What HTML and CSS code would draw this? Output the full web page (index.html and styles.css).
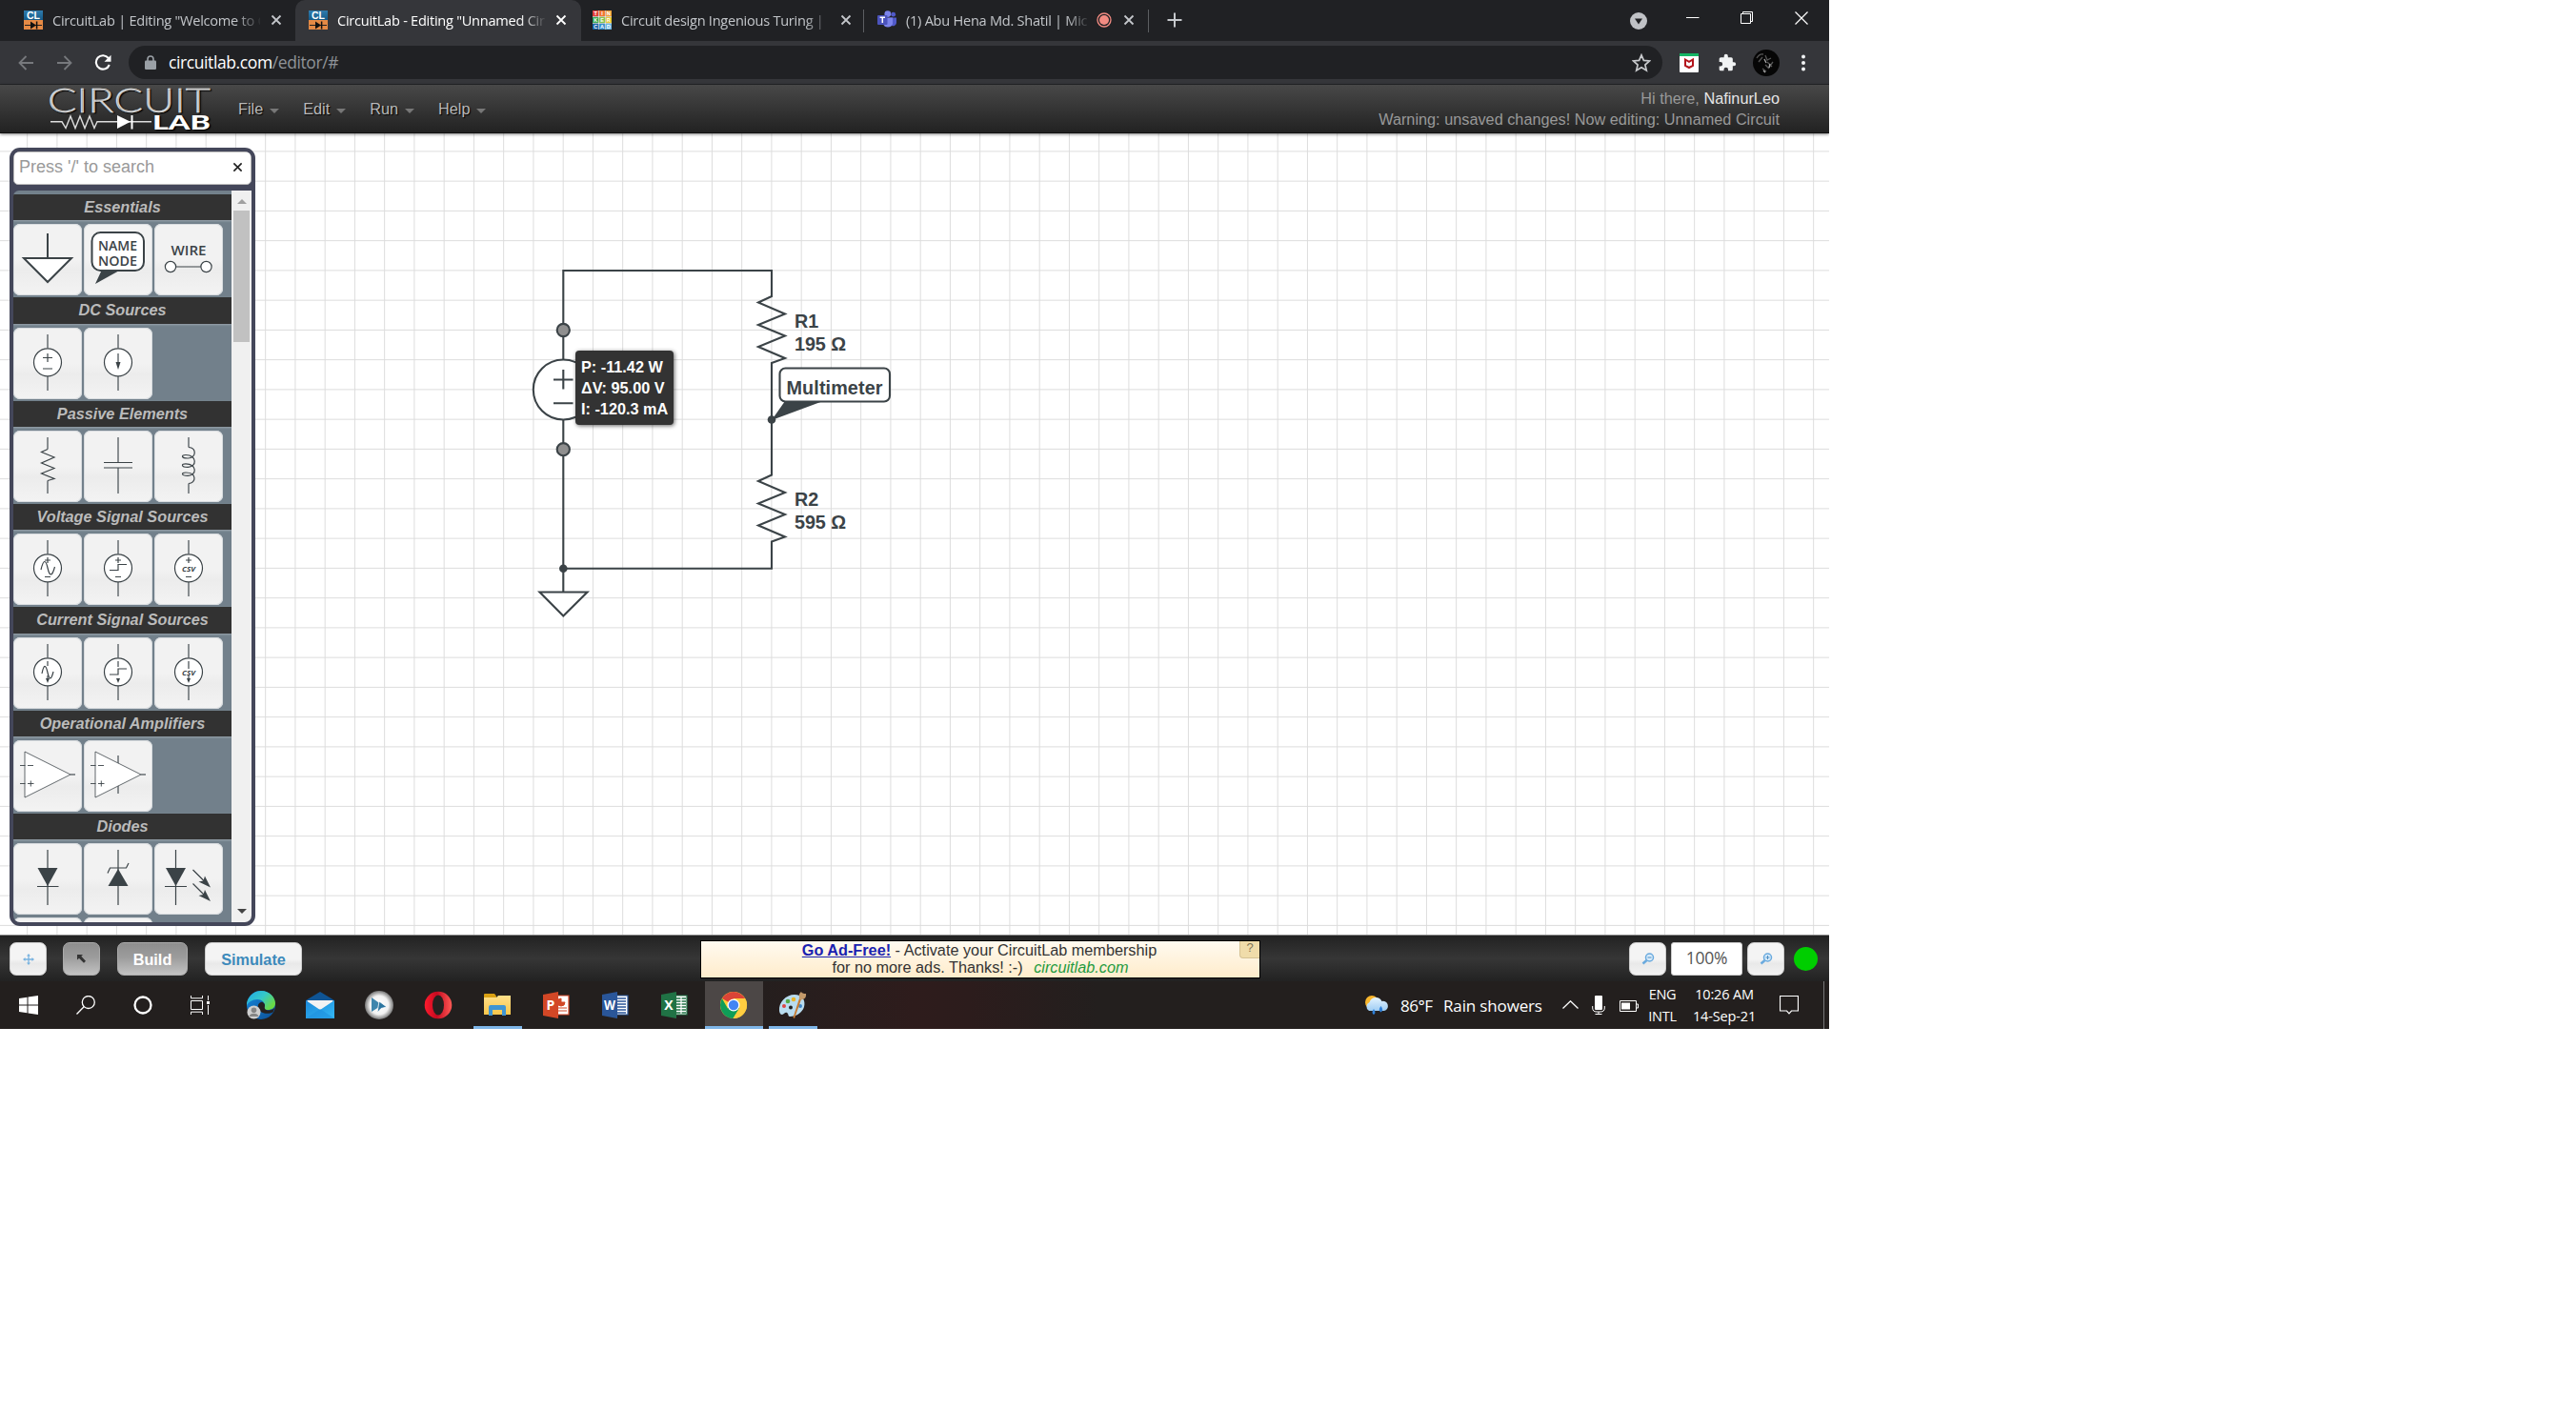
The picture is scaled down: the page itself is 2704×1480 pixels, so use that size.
FILE: index.html
```html
<!DOCTYPE html>
<html lang="en">
<head>
<meta charset="utf-8">
<title>CircuitLab - Editing "Unnamed Circuit"</title>
<link rel="stylesheet" href="styles.css">
</head>
<body>
<svg class="defs" width="0" height="0">
  <defs>
    <linearGradient id="clTop" x1="0" y1="0" x2="0" y2="1"><stop offset="0" stop-color="#2f7cae"/><stop offset="1" stop-color="#155a88"/></linearGradient>
    <linearGradient id="edgeA" x1="0" y1="0" x2="1" y2=".6"><stop offset="0" stop-color="#1fa9e6"/><stop offset=".55" stop-color="#35c8c8"/><stop offset="1" stop-color="#6ad944"/></linearGradient>
    <linearGradient id="edgeB" x1="0" y1="0" x2="1" y2="1"><stop offset="0" stop-color="#1487dc"/><stop offset="1" stop-color="#0d4f96"/></linearGradient>
    <linearGradient id="mail" x1="0" y1="0" x2="1" y2="1"><stop offset="0" stop-color="#1b88d8"/><stop offset="1" stop-color="#35b8f5"/></linearGradient>
    <linearGradient id="opera" x1="0" y1="0" x2="1" y2="0"><stop offset="0" stop-color="#ff1b2d"/><stop offset=".45" stop-color="#c50a20"/><stop offset="1" stop-color="#ff5a55"/></linearGradient>
    <radialGradient id="disc"><stop offset="0" stop-color="#fff"/><stop offset=".65" stop-color="#f2f2f2"/><stop offset="1" stop-color="#777"/></radialGradient>
    <linearGradient id="folder" x1="0" y1="0" x2="0" y2="1"><stop offset="0" stop-color="#ffe08a"/><stop offset="1" stop-color="#f7c64b"/></linearGradient>
    <linearGradient id="cloud" x1="0" y1="0" x2="0" y2="1"><stop offset="0" stop-color="#e3f3ff"/><stop offset="1" stop-color="#9fcdf3"/></linearGradient>
    <symbol id="cl" viewBox="0 0 20 20">
      <rect width="20" height="10" fill="url(#clTop)"/><rect y="10" width="20" height="10" fill="#e58a45"/>
      <text x="10" y="9.2" text-anchor="middle" class="cl-text">CL</text>
      <path d="M1 15.5H19" stroke="#222" stroke-width="1"/><path d="M7 11.5L13 15.5L7 19.5Z" fill="#111"/><path d="M13.6 11.5V19.5" stroke="#111" stroke-width="1.5"/>
    </symbol>
    <symbol id="x" viewBox="0 0 12 12"><path d="M1.5 1.5L10.5 10.5M10.5 1.5L1.5 10.5" stroke="currentColor" stroke-width="1.8"/></symbol>
    <symbol id="source" viewBox="0 0 72 75"><path d="M36 7V21.5M36 51V66" class="lead"/><circle cx="36" cy="36.3" r="14.5" fill="#fff"/></symbol>
  </defs>
</svg>

<div class="screen">
  <div class="tabs">
    <div class="tab"><svg class="fav"><use href="#cl"/></svg><span class="title">CircuitLab | Editing "Welcome to C</span><svg class="close"><use href="#x"/></svg></div>
    <div class="tab active"><svg class="fav"><use href="#cl"/></svg><span class="title">CircuitLab - Editing "Unnamed Cir</span><svg class="close"><use href="#x"/></svg></div>
    <div class="tab ruled">
      <svg class="fav" viewBox="0 0 20 20"><g><rect width="6.4" height="6.4" fill="#e2403a"/><rect x="6.8" width="6.4" height="6.4" fill="#f0762f"/><rect x="13.6" width="6.4" height="6.4" fill="#f5a03c"/><rect y="6.8" width="6.4" height="6.4" fill="#2fa84f"/><rect x="6.8" y="6.8" width="6.4" height="6.4" fill="#7cc243"/><rect x="13.6" y="6.8" width="6.4" height="6.4" fill="#e8c72e"/><rect y="13.6" width="6.4" height="6.4" fill="#1764a8"/><rect x="6.8" y="13.6" width="6.4" height="6.4" fill="#3490cf"/><rect x="13.6" y="13.6" width="6.4" height="6.4" fill="#68b7e4"/></g><path d="M0 6.6H20M0 13.4H20M6.6 0V20M13.4 0V20" stroke="#fff" stroke-width=".7"/><g class="tink"><text x="3.2" y="5.2">T</text><text x="10" y="5.2">I</text><text x="16.8" y="5.2">N</text><text x="3.2" y="12">K</text><text x="10" y="12">E</text><text x="16.8" y="12">R</text><text x="3.2" y="18.8">C</text><text x="10" y="18.8">A</text><text x="16.8" y="18.8">D</text></g></svg>
      <span class="title">Circuit design Ingenious Turing |</span><svg class="close"><use href="#x"/></svg></div>
    <div class="tab ruled meeting">
      <svg class="fav" viewBox="0 0 20 20"><circle cx="16.7" cy="4.2" r="2.4" fill="#5059c9"/><path d="M13 7.5H20V13a3.6 3.6 0 0 1-5 3z" fill="#5059c9"/><circle cx="10.8" cy="3.6" r="3.4" fill="#7b83eb"/><path d="M6 7.5H16V14a5.3 5.3 0 0 1-10 0z" fill="#7b83eb"/><rect y="5" width="10.5" height="10" rx="1" fill="#4b53bc"/><path d="M2.6 7.3H8M5.3 7.3V13" stroke="#fff" stroke-width="1.5"/></svg>
      <span class="title">(1) Abu Hena Md. Shatil | Mic</span>
      <svg class="rec" viewBox="0 0 16 16"><circle cx="8" cy="8" r="7" fill="none" stroke="#f28b82" stroke-width="1.3"/><circle cx="8" cy="8" r="5" fill="#f28b82"/></svg><svg class="close"><use href="#x"/></svg></div>
    <svg class="plus" viewBox="0 0 16 16"><path d="M8 .5V15.5M.5 8H15.5" stroke="#c5c8cc" stroke-width="2"/></svg>
    <div class="window-buttons">
      <svg width="18" height="18" viewBox="0 0 18 18"><circle cx="9" cy="9" r="9" fill="#c0c2c6"/><path d="M5 6.5H13L9 12.5Z" fill="#202124"/></svg>
      <svg width="14" height="14" viewBox="0 0 14 14"><path d="M0 6.5H13.5" stroke="#fff"/></svg>
      <svg width="14" height="14" viewBox="0 0 14 14" fill="none" stroke="#fff"><path d="M.5 2.500H10.500V12.500H.5ZM2.500 2.500V.5H12.500V10.500H10.500"/></svg>
      <svg width="14" height="14" viewBox="0 0 14 14"><path d="M.5 .5L13.5 13.5M13.5 .5L.5 13.5" stroke="#fff" stroke-width="1.2"/></svg>
    </div>
  </div>

  <div class="toolbar">
    <div class="nav">
      <svg width="17" height="16" viewBox="0 0 17 16" fill="none" stroke="#77797d" stroke-width="1.8"><path d="M16 8H1.5M8.5 1L1.5 8L8.5 15"/></svg>
      <svg width="17" height="16" viewBox="0 0 17 16" fill="none" stroke="#77797d" stroke-width="1.8"><path d="M1 8H15.5M8.5 1L15.5 8L8.5 15"/></svg>
      <svg width="18" height="18" viewBox="0 0 18 18"><path d="M14.8 4A7.2 7.2 0 1 0 15.8 11" fill="none" stroke="#fff" stroke-width="2.1"/><path d="M17.5 .8V7.8H10.5Z" fill="#fff"/></svg>
    </div>
    <div class="omnibox">
      <svg width="12" height="15" viewBox="0 0 12 15"><path d="M3 6V4a3 3 0 0 1 6 0V6" fill="none" stroke="#9aa0a6" stroke-width="1.6"/><rect y="5.5" width="12" height="9.5" rx="1.2" fill="#9aa0a6"/></svg>
      <span class="url">circuitlab.com<i>/editor/#</i></span>
      <svg class="star" width="20" height="20" viewBox="0 0 20 20"><path d="M10 1.8L12.4 7.4L18.5 8L13.9 12L15.3 18L10 14.8L4.7 18L6.1 12L1.5 8L7.6 7.4Z" fill="none" stroke="#c8cacd" stroke-width="1.7"/></svg>
    </div>
    <div class="extensions">
      <svg width="20" height="20" viewBox="0 0 20 20"><rect width="20" height="20" rx="1" fill="#fff"/><path d="M0 0H20V3H0Z" fill="#14b564"/><path d="M6 6.5L10 8.8L14 6.5V12.8L10 15L6 12.8Z" fill="none" stroke="#b3151c" stroke-width="2"/></svg>
      <svg width="20" height="20" viewBox="0 0 24 24"><path d="M20.5 11H19V7a2 2 0 0 0-2-2h-4V3.500a2.500 2.500 0 0 0-5 0V5H4a2 2 0 0 0-2 2v3.800h1.500a2.700 2.700 0 0 1 0 5.400H2V20a2 2 0 0 0 2 2h3.800v-1.500a2.700 2.700 0 0 1 5.400 0V22H17a2 2 0 0 0 2-2v-4h1.500a2.500 2.500 0 0 0 0-5z" fill="#f1f3f4"/></svg>
      <svg width="28" height="28" viewBox="0 0 28 28"><circle cx="14" cy="14" r="14" fill="#060606"/><path d="M4 9Q7 4 11 5M6 13L10 8M13 6L15 11L19 9M15 13L20 18M16 20L21 13M10 20L14 23M13 16L17 20" stroke="#555" stroke-width="1.3" fill="none"/><path d="M12 10L14 14M18 15L17 19M11 22L13 24" stroke="#aaa" stroke-width="1.3"/></svg>
      <svg width="6" height="18" viewBox="0 0 6 18" fill="#f1f3f4"><circle cx="3" cy="2.500" r="2"/><circle cx="3" cy="9" r="2"/><circle cx="3" cy="15.500" r="2"/></svg>
    </div>
  </div>

  <header class="header">
    <svg class="logo" viewBox="0 0 172 48">
      <text x="-1" y="26.500" class="logo-thin" textLength="171" lengthAdjust="spacingAndGlyphs">CIRCUIT</text>
      <path d="M2 36.800H14L18 43.500L23 31L28 43.500L33 31L38 43.500L43 31L48 43.500L51 36.800H108" fill="none" stroke="#ddd" stroke-width="1.400"/>
      <path d="M72 30L86 36.800L72 44Z" fill="#fff"/><path d="M87.500 30V44.500" stroke="#fff" stroke-width="2"/>
      <text x="109" y="44.500" class="logo-bold" textLength="61" lengthAdjust="spacingAndGlyphs">LAB</text>
    </svg>
    <nav class="menu"><span class="m1">File</span><span class="m2">Edit</span><span class="m3">Run</span><span>Help</span></nav>
    <div class="status"><div>Hi there, <b>NafinurLeo</b></div><div>Warning: unsaved changes! Now editing: Unnamed Circuit</div></div>
  </header>

  <main class="canvas">
    <aside class="palette">
      <div class="search"><span>Press '/' to search</span><svg width="11" height="11"><use href="#x"/></svg></div>
      <div class="body">
        <div class="list">
          <section><h3>Essentials</h3><div class="parts">
            <svg viewBox="0 0 72 75"><g class="bold"><path d="M36 10V36"/><path d="M11 36H61L36 61Z" fill="#fff"/></g></svg>
            <svg viewBox="0 0 72 75"><path d="M12 63L19 48H39Z" fill="#3b4347" stroke="none"/><rect x="8.500" y="9" width="54.500" height="40" rx="9" fill="#fff" stroke-width="2"/><text x="15" y="27.500" textLength="41" lengthAdjust="spacingAndGlyphs">NAME</text><text x="15" y="43.500" textLength="41" lengthAdjust="spacingAndGlyphs">NODE</text></svg>
            <svg viewBox="0 0 72 75"><text x="17.500" y="33" textLength="37" lengthAdjust="spacingAndGlyphs">WIRE</text><path d="M22.500 45H49"/><circle cx="17" cy="45" r="5.600" fill="#fff"/><circle cx="54.500" cy="45" r="5.600" fill="#fff"/></svg>
          </div></section>
          <section><h3>DC Sources</h3><div class="parts">
            <svg viewBox="0 0 72 75"><use href="#source"/><path d="M31 31.500H41M36 27V36M31 43H41"/></svg>
            <svg viewBox="0 0 72 75"><use href="#source"/><path d="M36 27V38" class="lead"/><path d="M33.500 36H38.500L36 44Z" class="solid"/></svg>
          </div></section>
          <section><h3>Passive Elements</h3><div class="parts">
            <svg viewBox="0 0 72 75"><path d="M36 7V19.500M36 52.500V66" class="lead"/><path d="M36 19.500L29.500 22.500L43 28L29.500 34L43 39.500L29.500 45L43 50.500L36 52.500"/></svg>
            <svg viewBox="0 0 72 75"><path d="M36 7V33.500M36 39V66" class="lead"/><path d="M21 33.500H51M21 39H51"/></svg>
            <svg viewBox="0 0 72 75"><path d="M36 7V17.500M36 55.500V66" class="lead"/><path d="M36 17.500C45 17.500 44 29.500 35 29C28 29 28 25.500 33 25.500C45 25.500 45 38.500 35 38.300C28 38.300 28 34.800 33 34.800C45 34.800 45 47.500 35 47.300C28 47.300 28 44 33 44C45 44 44 55.500 36 55.500"/></svg>
          </div></section>
          <section><h3>Voltage Signal Sources</h3><div class="parts">
            <svg viewBox="0 0 72 75"><use href="#source"/><path d="M29 38C31.500 27 34 27 36 36S40.500 46 43.500 35M33 28H39M36 25V31M33 45.500H39"/></svg>
            <svg viewBox="0 0 72 75"><use href="#source"/><path d="M27 38.500H36V32.500H45M33 28H39M36 25V31M33 45.500H39"/></svg>
            <svg viewBox="0 0 72 75"><use href="#source"/><path d="M33 28H39M36 25V31M33 45.500H39"/><text x="29" y="40" class="csv" textLength="14" lengthAdjust="spacingAndGlyphs">CSV</text></svg>
          </div></section>
          <section><h3>Current Signal Sources</h3><div class="parts">
            <svg viewBox="0 0 72 75"><use href="#source"/><path d="M36 25V30M36 40V45" class="lead"/><path d="M30 38C32 28 34 28 36 37S40 44 42 36"/><path d="M34 43H38L36 48Z" class="solid"/></svg>
            <svg viewBox="0 0 72 75"><use href="#source"/><path d="M36 25V31" class="lead"/><path d="M27 39H36V33H45"/><path d="M34 43H38L36 48Z" class="solid"/></svg>
            <svg viewBox="0 0 72 75"><use href="#source"/><path d="M36 25V33M36 40V46" class="lead"/><text x="29" y="40" class="csv" textLength="14" lengthAdjust="spacingAndGlyphs">CSV</text><path d="M34 43H38L36 48Z" class="solid"/></svg>
          </div></section>
          <section><h3>Operational Amplifiers</h3><div class="parts">
            <svg viewBox="0 0 72 75"><path d="M12 12V60L60 36Z" fill="#fff" stroke-width=".8"/><path d="M60 36H65" class="lead"/><path class="fine" d="M7 26.500H12.500M15 26.500H21M7 45.500H12.500M15 45.500H21.500M18.300 42.500V48.500"/></svg>
            <svg viewBox="0 0 72 75"><path d="M36 16V56" class="lead"/><path d="M12 12V60L60 36Z" fill="#fff" stroke-width=".8"/><path d="M60 36H65" class="lead"/><path class="fine" d="M7 26.500H12.500M15 26.500H21M7 45.500H12.500M15 45.500H21.500M18.300 42.500V48.500"/></svg>
          </div></section>
          <section><h3>Diodes</h3><div class="parts">
            <svg viewBox="0 0 72 75"><path d="M36 7V65M25 45.500H47.500"/><path d="M25.500 26H46.500L36 45Z" class="solid"/></svg>
            <svg viewBox="0 0 72 75"><path d="M36 7V65M25 31.500L27.500 26H44.500L47 21"/><path d="M25.500 45H46.500L36 27Z" class="solid"/></svg>
            <svg viewBox="0 0 72 75"><path d="M22.500 7V65M11 45.500H34"/><path d="M12 26H33L22.500 45Z" class="solid"/><path d="M40.500 28L54 41.500M40.500 42.500L54 56"/><path d="M59 46.500L46.500 40.500L51.500 39.500L53 34.500ZM59 61L46.500 55L51.500 54L53 49Z" class="solid"/></svg>
            <svg viewBox="0 0 72 75"></svg><svg viewBox="0 0 72 75"></svg>
          </div></section>
        </div>
        <div class="scrollbar"><i class="up"></i><div class="thumb"></div><i class="down"></i></div>
      </div>
    </aside>
    <svg class="circuit" viewBox="0 140 1920 841" fill="none" stroke="#3b4347" stroke-width="2.100">
      <path d="M591.300 377V284H810V311L796 317.500L824 329.500L796 341L824 352.500L796 364L824 376L810 381V498.500L796 505L824 517L796 528.500L824 540L796 551.500L824 563.500L810 568.500V596.700H591.300M591.300 440V621.500"/>
      <circle cx="591.300" cy="409" r="31.500" fill="#fff"/><path d="M581 398.500H601.500M591.300 388V408.500M581 423.300H601.500"/>
      <circle cx="591.300" cy="346.500" r="6.600" fill="#8f8f8f"/><circle cx="591.300" cy="471.700" r="6.600" fill="#8f8f8f"/>
      <path d="M566.500 621.500H616.500L591.300 646.500Z" fill="#fff"/>
      <g fill="#3b4347" stroke="none"><circle cx="591.300" cy="596.700" r="4.300"/><circle cx="810" cy="440.500" r="4.300"/><path d="M810 441L824 421H864Z"/></g>
      <rect x="818.500" y="386.500" width="115.500" height="35" rx="6" fill="#fff"/>
      <g class="labels"><text x="825.500" y="413.600" textLength="101">Multimeter</text><text x="834" y="343.500">R1</text><text x="834" y="367.500" textLength="54">195 Ω</text><text x="834" y="530.500">R2</text><text x="834" y="554.500" textLength="54">595 Ω</text></g>
    </svg>
    <div class="tooltip">P: -11.42 W<br>ΔV: 95.00 V<br>I: -120.3 mA</div>
  </main>

  <footer class="controls">
    <button class="btn sq"><svg width="12" height="12" viewBox="0 0 12 12"><path d="M6 1V11M1 6H11" stroke="#79b3e0" stroke-width="1.300"/><path d="M6 0L8 2.500H4ZM6 12L4 9.500H8ZM0 6L2.500 4V8ZM12 6L9.500 8V4Z" fill="#79b3e0"/></svg></button>
    <button class="btn sq on g1"><svg width="11" height="11" viewBox="0 0 11 11"><path d="M1 1H7L5.300 2.700L10 7.800L8 9.800L3 4.700L1 6.500Z" fill="#333"/></svg></button>
    <button class="btn on build">Build</button>
    <button class="btn simulate">Simulate</button>
    <div class="ad"><div class="l1"><a>Go Ad-Free!</a> - Activate your CircuitLab membership</div><div class="l2">for no more ads. Thanks! :-) <em>circuitlab.com</em></div><span class="q">?</span></div>
    <div class="zoom">
      <button class="btn sq"><svg width="14" height="13" viewBox="0 0 14 13"><circle cx="8.500" cy="5" r="4" fill="#d8ebfa" stroke="#6aaade" stroke-width="1.500"/><path d="M5.500 8L1.500 11.500" stroke="#6aaade" stroke-width="2.500"/><path d="M6.500 5H10.500" stroke="#4c8fc4"/></svg></button>
      <span class="pct">100%</span>
      <button class="btn sq"><svg width="14" height="13" viewBox="0 0 14 13"><circle cx="8.500" cy="5" r="4" fill="#d8ebfa" stroke="#6aaade" stroke-width="1.500"/><path d="M5.500 8L1.500 11.500" stroke="#6aaade" stroke-width="2.500"/><path d="M6.500 5H10.500M8.500 3V7" stroke="#4c8fc4"/></svg></button>
      <span class="dot"></span>
    </div>
  </footer>

  <div class="taskbar">
    <div class="sys">
      <svg viewBox="0 0 20 20"><path d="M0 3L8.500 1.800V9.500H0ZM9.500 1.600L20 0V9.500H9.500ZM0 10.500H8.500V18.200L0 17ZM9.500 10.500H20V20L9.500 18.400Z" fill="#fff"/></svg>
      <svg viewBox="0 0 20 20" fill="none" stroke="#fff" stroke-width="1.300"><circle cx="12.800" cy="7" r="6.500"/><path d="M8.300 11.500L.5 19.500"/></svg>
      <svg viewBox="0 0 20 20"><circle cx="10" cy="10" r="8.500" fill="none" stroke="#fff" stroke-width="2.300"/></svg>
      <svg viewBox="0 0 20 20"><path d="M.5 0V2.800H12.500V0M.5 5.500H12.500V14.500H.5ZM.5 20V17.200H12.500V20M18.500 0V5M18.500 10V20" stroke="#fff" fill="none"/><rect x="17" y="6" width="3" height="3" fill="#fff"/></svg>
    </div>
    <div class="apps">
      <div><svg viewBox="0 0 30 30"><circle cx="15" cy="15" r="15" fill="url(#edgeB)"/><path d="M0 13C2 4 9 0 15 0C24 0 30 7 30 13C30 18 26 20 22 20C18 20 18 18 19 16C19 12 16 9 11 9C6 9 1 12 0 16Z" fill="url(#edgeA)"/><path d="M19 16C18 19 20 20.500 23 20.500C26 20.500 28 19.500 29.500 17.500L27.500 22.500C22 25 14 24 12 18C11 14 14 11.500 16.500 11.800C18.500 13 19 14 19 16Z" fill="#252120"/><circle cx="7.500" cy="22.500" r="7" fill="#cfcfcf"/><circle cx="7.500" cy="20.300" r="2.800" fill="#858585"/><path d="M2.500 27C3 22.500 12 22.500 12.500 27Z" fill="#858585"/></svg></div>
      <div><svg viewBox="0 0 30 30"><path d="M0 10L15 1L30 10V14H0Z" fill="#0f5494"/><path d="M1.500 10H28.500V20H1.500Z" fill="#f3f3f3"/><path d="M0 10L15 20L30 10V29H0Z" fill="url(#mail)"/><path d="M0 29L15 19L30 29Z" fill="#1e8fdd" opacity=".6"/></svg></div>
      <div><svg viewBox="0 0 30 30"><circle cx="15" cy="15" r="15" fill="url(#disc)"/><path d="M7 7L18 15L7 22Z" fill="#3f86ad"/><path d="M15 11L23 17L17 18.500L13 23Z" fill="#2c75a0" stroke="#fff" stroke-width=".8"/></svg></div>
      <div><svg viewBox="0 0 30 30"><circle cx="15" cy="15" r="14.300" fill="url(#opera)"/><ellipse cx="15" cy="15" rx="6" ry="10.500" fill="#252120"/></svg></div>
      <div class="open"><svg viewBox="0 0 30 30"><path d="M1 4Q1 3 2 3H12L14 5.500V9H1Z" fill="#d9a013"/><path d="M1 7H14L16 5H29V25H1Z" fill="url(#folder)"/><path d="M6 26V17Q6 15 8 15H22Q24 15 24 17V26H20V20H10V26Z" fill="#3f95d3"/></svg></div>
      <div><svg viewBox="0 0 30 30"><path d="M14 5H28V25H14Z" fill="#fff" stroke="#d24726" stroke-width="1.200"/><path d="M20 8A4 4 0 1 0 24 12H20ZM17 18H26M17 21H26" fill="#d24726" stroke="#d24726"/><path d="M1 4L17 1V29L1 26Z" fill="#d24726"/><text x="9" y="20">P</text></svg></div>
      <div><svg viewBox="0 0 30 30"><path d="M14 5H28V25H14Z" fill="#fff" stroke="#2a5699" stroke-width="1.200"/><path d="M17 8H26M17 11H26M17 14H26M17 17H26M17 20H26M17 23H26" stroke="#2a5699" stroke-width="1.300"/><path d="M1 4L17 1V29L1 26Z" fill="#2a5699"/><text x="9" y="20" textLength="12" lengthAdjust="spacingAndGlyphs">W</text></svg></div>
      <div><svg viewBox="0 0 30 30"><path d="M14 5H28V25H14Z" fill="#fff" stroke="#207245" stroke-width="1.200"/><path d="M17 8H27M17 11H27M17 14H27M17 17H27M17 20H27M17 23H27" stroke="#207245" stroke-width="1.600"/><path d="M22 6V24" stroke="#fff" stroke-width="1.200"/><path d="M1 4L17 1V29L1 26Z" fill="#207245"/><text x="9" y="20">X</text></svg></div>
      <div class="current"><svg viewBox="0 0 30 30"><circle cx="15" cy="15" r="14" fill="#fc3"/><path d="M15 15L2.900 8A14 14 0 0 1 27.100 8H15Z" fill="#db4437"/><path d="M2.900 8A14 14 0 0 0 14.500 29L21 18.500L15 15L8.900 18.500Z" fill="#0f9d58"/><path d="M15 8H27.100A14 14 0 0 1 14.500 29L21 18.500Z" fill="#ffcd40"/><circle cx="15" cy="15" r="6.500" fill="#fff"/><circle cx="15" cy="15" r="5.200" fill="#4285f4"/></svg></div>
      <div class="open paint"><svg viewBox="0 0 30 30"><path d="M1 21C0 12 8 4 17 4C25 4 29 10 27 17C25 23 19 27 12 27C10 27 11 24 9 23C7 22 6 25 4 25Q1.500 25 1 21Z" fill="#b9dcef"/><circle cx="6" cy="16" r="2" fill="#d44"/><circle cx="10" cy="11" r="2.300" fill="#5a4"/><circle cx="16" cy="9" r="2.300" fill="#e8b42c"/><circle cx="13" cy="17.500" r="2" fill="#222"/><circle cx="23" cy="16" r="2" fill="#3e86c8"/><path d="M24 9L17 29L15.500 28L22 8Z" fill="#c77b32"/><path d="M22 8Q21 3 24 1Q25 3 29 3Q30 8 24.500 9.500Z" fill="#c49a6a"/></svg></div>
    </div>
    <div class="tray">
      <svg class="weather" viewBox="0 0 26 20"><circle cx="8" cy="7" r="7" fill="#f8b62d"/><path d="M5 16A5 5 0 0 1 5.500 7A7 7 0 0 1 18.500 6A5 5 0 0 1 21 16Z" fill="url(#cloud)"/><path d="M10 14Q13 18 10 20Q7 18 10 14ZM17.500 11Q21 15.500 17.500 17.500Q14 15.500 17.500 11Z" fill="#2f80d8"/></svg>
      <span class="temp">86°F</span><span class="rain">Rain showers</span>
      <svg class="chev" width="17" height="9" viewBox="0 0 17 9"><path d="M.5 8.500L8.500 .8L16.500 8.500" fill="none" stroke="#fff" stroke-width="1.300"/></svg>
      <svg class="mic" width="14" height="20" viewBox="0 0 14 20"><rect x="3" width="8" height="15" rx="1" fill="#fff"/><path d="M.7 11V13Q.7 17 5 17H9Q13.300 17 13.300 13V11M7 17V19.500M3.500 19.500H10.500" fill="none" stroke="#fff"/></svg>
      <svg class="bat" width="20" height="12" viewBox="0 0 20 12"><path d="M.5 .5H17.500V11.500H.5ZM18 4H19.500V8H18" fill="none" stroke="#fff"/><rect x="2" y="2.500" width="9" height="7" fill="#fff"/></svg>
      <div class="two lang"><span>ENG</span><span>INTL</span></div>
      <div class="two time"><span>10:26 AM</span><span>14-Sep-21</span></div>
      <svg class="note" width="20" height="20" viewBox="0 0 20 20"><path d="M.5 .5H19.500V16H12.500L10 18.800L7.500 16H.5Z" fill="none" stroke="#fff" stroke-width="1.200"/></svg>
    </div>
  </div>
</div>
</body>
</html>
```
FILE: styles.css
```css
* { box-sizing: border-box; }
body { margin: 0; background: #fff; font-family: "Liberation Sans", Arial, sans-serif; }
svg { display: block; flex: none; }
.defs { position: absolute; }
.screen { width: 1920px; height: 1080px; display: grid; grid-template-rows: 43px 46px 51px 841px 49px 50px; overflow: hidden; }

/* Browser tabs */
.tabs { display: flex; background: #202124; color: #c3c6ca; font: 14.6px/41px "Open Sans", sans-serif; letter-spacing: -.27px; padding-left: 12px; }
.tab { display: flex; align-items: center; width: 299px; padding: 0 13px 1px; }
.fav { width: 20px; height: 20px; }
.title { width: 218px; margin: 0 11px 0 10px; overflow: hidden; white-space: nowrap; -webkit-mask: linear-gradient(90deg, #000 88%, transparent 101%); mask: linear-gradient(90deg, #000 88%, transparent 101%); }
.close { width: 12px; height: 12px; }
.active { background: #35363a; color: #fff; border-radius: 10px 10px 0 0; margin-left: -1px; padding-left: 14px; width: 300px; }
.ruled { position: relative; width: 297px; padding-left: 12px; }
.ruled .title { margin-right: 11px; width: 219px; }
.ruled::after { content: ""; position: absolute; right: 0; top: 10px; width: 1px; height: 24px; background: #5c5e62; }
.meeting { width: 299px; padding-left: 14px; }
.meeting .title { width: 192px; margin-right: 8px; }
.rec { width: 16px; height: 16px; margin-right: 12px; }
.plus { width: 16px; height: 16px; margin: 13px 0 0 19px; }
.window-buttons { margin-left: auto; display: flex; padding: 0 22px 0 0; gap: 43px; height: 38px; align-items: center; }
.window-buttons svg:first-child { margin: 6px -2px 0 0; }
.cl-text { font: bold 10.5px "Liberation Sans", sans-serif; fill: #fff; letter-spacing: 0; }
.tink { font: bold 5.5px "Liberation Sans", sans-serif; fill: #fff; text-anchor: middle; letter-spacing: 0; }

/* Address bar */
.toolbar { display: flex; align-items: center; background: #35363a; border-bottom: 1px solid #232427; }
.nav { width: 135px; display: flex; align-items: center; gap: 23px; padding-left: 19px; }
.omnibox { width: 1610px; height: 35px; border-radius: 18px; background: #202124; display: flex; align-items: center; padding: 0 12px 0 17px; font: 17.5px "Open Sans", sans-serif; color: #fff; }
.url { margin: -1px auto 0 13px; letter-spacing: -.4px; }
.url i { font-style: normal; color: #8f9398; }
.extensions { display: flex; align-items: center; padding-left: 17.5px; }
.extensions svg:nth-child(2) { margin: 0 17px 0 20px; }
.extensions svg:nth-child(4) { margin-left: 22px; }

/* Site header */
.header { position: relative; z-index: 2; display: flex; background: linear-gradient(#484848, #222); border-bottom: 1px solid #111; box-shadow: 0 1px 3px rgba(0,0,0,.5); font-size: 16.25px; color: #b9b9b9; text-shadow: 1px 1px 1px #000; padding-right: 52px; }
.logo { width: 172px; height: 48px; margin: 2px 0 0 51px; }
.logo-thin { font: 300 34.5px Lato, sans-serif; fill: #eee; stroke: #eee; stroke-width: .3; }
.logo-bold { font: 900 20.5px Lato, sans-serif; fill: #fff; }
.menu { display: flex; padding-left: 27px; line-height: 51px; }
.menu span { display: flex; align-items: center; margin-right: 25px; }
.menu span::after { content: ""; border: 5px solid transparent; border-top: 5.500px solid #777; border-bottom: 0; margin: 4px 0 0 7px; }
.status { margin-left: auto; text-align: right; line-height: 22px; padding-top: 3px; color: #999; text-shadow: none; letter-spacing: .01px; }
.status b { font-weight: normal; color: #e6e6e6; }

/* Drawing area */
.canvas { position: relative; overflow: hidden; padding: 15px 10px; background-color: #fff; background-image: linear-gradient(90deg, #dcdcdc 1.300px, transparent 1.300px), linear-gradient(#dcdcdc 1.300px, transparent 1.300px); background-size: 31.250px 31.250px; background-position: 28.200px 18.400px; }
.circuit { position: absolute; left: 0; top: 0; width: 1920px; height: 841px; }
.labels { font-size: 19.800px; font-weight: bold; fill: #3b4347; stroke: none; }
.tooltip { position: absolute; left: 604px; top: 228px; width: 103px; height: 78px; background: #333; color: #fff; border-radius: 4px; padding: 6px 0 0 6px; font-weight: bold; font-size: 16.250px; line-height: 22px; white-space: nowrap; box-shadow: 1px 1px 4px rgba(0,0,0,.6); }

/* Component palette */
.palette { position: relative; z-index: 1; width: 258px; height: 817px; border: 4px solid #44475a; border-radius: 11px; background: #44475a; display: flex; flex-direction: column; gap: 6px; overflow: hidden; }
.search { height: 35px; flex: none; background: #fff; border: 1px solid #bbb; border-radius: 5px; display: flex; justify-content: space-between; align-items: center; padding: 0 8px 2px 5px; font-size: 18px; color: #999; }
.search svg { color: #222; }
.body { display: flex; height: 768px; flex: none; }
.list { width: 229px; height: 768px; overflow: hidden; background: #72808b; padding-top: 4px; border-radius: 6px 0 0 0; }
.list h3 { margin: 0; height: 27.330px; background: #323232; color: #bbb; font: italic bold 16.250px/27px "Liberation Sans", sans-serif; text-align: center; box-shadow: 0 1px 2px #9aa5ad; }
.parts { display: grid; grid-template-columns: repeat(3, 72px); gap: 3px 2px; padding: 4px 0 2px; }
.parts svg { width: 72px; height: 75px; border-radius: 7px; background: linear-gradient(#f2f2f2 50%, #ececec 65%, #f3f3f3); box-shadow: inset 0 0 0 1px #d8dcdf; fill: none; stroke: #3b4347; stroke-width: 1.200; }
.parts text { font: 600 15px "Open Sans", sans-serif; fill: #3b4347; stroke: none; }
.parts .csv { font: italic bold 7px "Open Sans", sans-serif; }
.bold { stroke-width: 2; }
.fine { stroke-width: .9; }
.lead { stroke: #666c70; stroke-width: 1.500; }
.solid { fill: #3b4347; stroke: none; }
.scrollbar { width: 21px; background: #f0f0f0; display: flex; flex-direction: column; align-items: center; padding: 9px 0; }
.scrollbar i { border: 5px solid transparent; }
.scrollbar .up { border-bottom-color: #a0a0a0; border-top: 0; }
.scrollbar .down { border-top-color: #444; border-bottom: 0; margin-top: auto; }
.thumb { width: 17px; height: 138px; background: #c1c1c1; margin-top: 7px; }

/* Bottom controls */
.controls { position: relative; display: flex; padding: 7px 12px 0 10px; background: linear-gradient(#222, #363636 50%, #222); border-top: 1px solid #888; }
.btn { height: 35px; padding: 0; border: 1px solid #ccc; border-radius: 7px; background: linear-gradient(#f4f4f4 50%, #e9e9e9 65%, #f2f2f2); display: flex; align-items: center; justify-content: center; font: bold 16.250px "Liberation Sans", sans-serif; color: #3d8abb; flex: none; }
.sq { width: 39px; }
.on { background: linear-gradient(#8e8e8e, #9c9c9c 45%, #c2c2c2); border-color: #aaa; color: #fff; }
.g1 { margin-left: 17px; }
.build { width: 74px; margin-left: 18px; padding-top: 2px; }
.simulate { width: 102px; margin-left: 18px; padding-top: 2px; }
.ad { position: relative; width: 588px; height: 40px; margin: -2px 0 0 418px; border: 1px solid #000; background: linear-gradient(#fffaf0, #ffeccb); font-size: 16.250px; line-height: 18px; color: #333; text-align: center; white-space: pre; }
.ad a { color: #1a22b0; font-weight: bold; text-decoration: underline; }
.ad em { color: #1f9b3f; margin-left: 7px; }
.l1 { margin-right: 2px; }
.q { position: absolute; right: 0; top: 0; width: 21px; height: 18px; background: #f0dcaa; border-radius: 0 0 0 4px; border: 1px solid #d5c294; border-width: 0 0 1px 1px; font-size: 13px; line-height: 14px; color: #807656; }
.zoom { margin-left: auto; display: flex; gap: 5px; }
.pct { width: 75px; height: 35px; background: #fff; border: 1px solid #ccc; border-radius: 3px; text-align: center; font: 17.500px/31px "Open Sans", sans-serif; letter-spacing: -.3px; color: #555; }
.dot { width: 25px; height: 25px; border-radius: 50%; background: #00ce00; margin: 5px 0 0 5px; }

/* Taskbar */
.taskbar { display: flex; background: linear-gradient(90deg, #231f1e 40%, #2e1c1c 50%, #2c1c1c 53%, #231f1e 60%); color: #fff; font-family: "Open Sans", sans-serif; }
.sys { display: flex; padding: 15px 23px 0 20px; gap: 40px; }
.sys svg { width: 20px; height: 20px; }
.apps { display: flex; }
.apps div { width: 62px; height: 50px; padding: 10px 0 0 16px; }
.apps svg { width: 30px; height: 30px; }
.apps text { font: bold 14px "Open Sans", sans-serif; fill: #fff; text-anchor: middle; }
.apps .open { background: linear-gradient(#7eb6e8, #7eb6e8) 6px 47px / 51px 3px no-repeat; }
.apps .current { width: 61px; margin-left: 1px; padding-left: 15px; background: #4c4746; border-bottom: 3px solid #7eb6e8; }
.tray { margin-left: auto; width: 488px; display: flex; border-right: 1px solid #777; margin-right: 5px; white-space: nowrap; font-size: 17px; line-height: 50px; }
.weather { width: 26px; height: 20px; margin: 15px 12px 0 5px; }
.temp { width: 46px; letter-spacing: -.5px; padding-top: 1px; }
.rain { width: 125px; letter-spacing: -.15px; padding-top: 1px; margin-left: -1px; }
.chev { margin: 20px 15px 0 0; }
.mic { margin: 15px 15px 0 -1px; }
.bat { margin: 20px 9px 0 0; }
.two { display: flex; flex-direction: column; align-items: center; font-size: 14.500px; line-height: 23px; padding-top: 2px; letter-spacing: -.3px; }
.lang { width: 34px; margin-left: -1px; }
.time { width: 76px; margin: 0 20px 0 10px; letter-spacing: -.15px; }
.note { margin-top: 15px; }
```
